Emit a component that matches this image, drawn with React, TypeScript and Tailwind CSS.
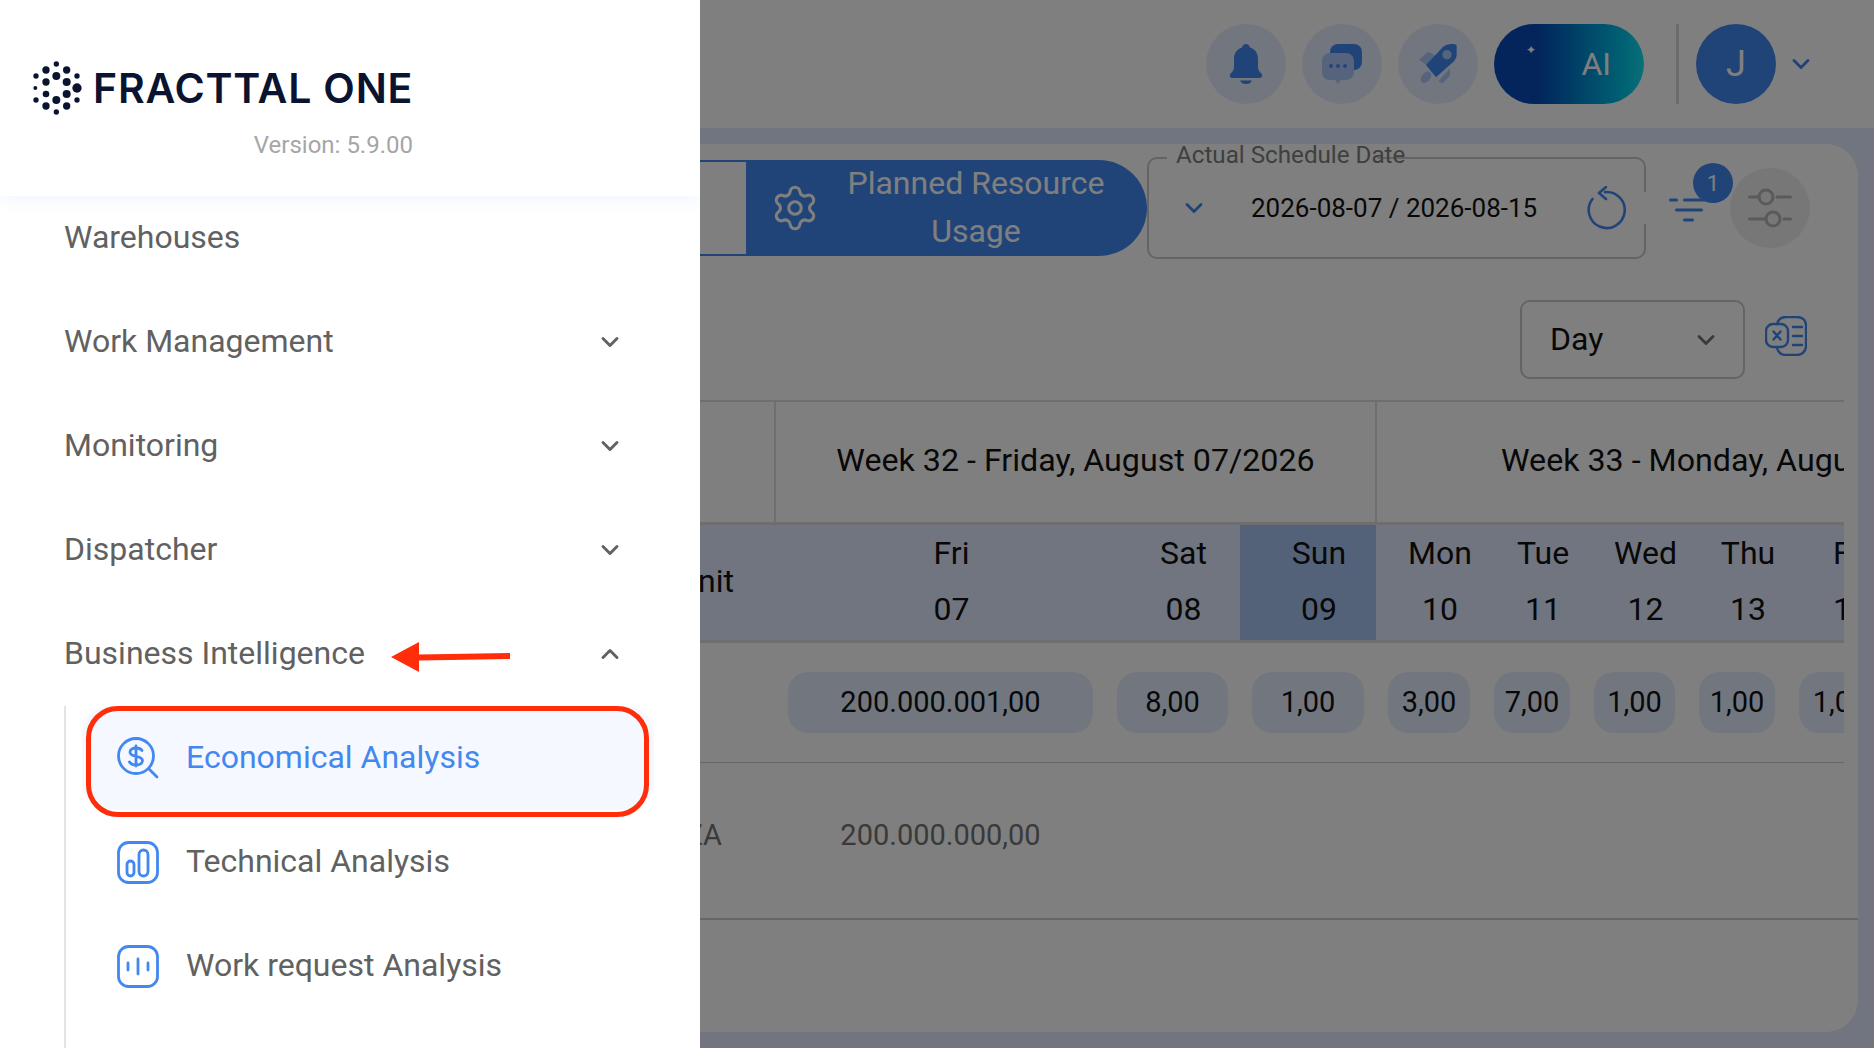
import { ChevronDown, ChevronUp, Settings } from "lucide-react";

const days = [
  { label: "Fri", num: "07", value: "200.000.001,00", width: "w-[329px]", sunday: false },
  { label: "Sat", num: "08", value: "8,00", width: "w-[135px]", sunday: false },
  { label: "Sun", num: "09", value: "1,00", width: "w-[136px]", sunday: true },
  { label: "Mon", num: "10", value: "3,00", width: "w-[106px]", sunday: false },
  { label: "Tue", num: "11", value: "7,00", width: "w-[100px]", sunday: false },
  { label: "Wed", num: "12", value: "1,00", width: "w-[105px]", sunday: false },
  { label: "Thu", num: "13", value: "1,00", width: "w-[100px]", sunday: false },
  { label: "Fri", num: "14", value: "1,00", width: "w-[106px]", sunday: false },
];

const dots = [
  [109, 42, 8], [78, 60, 11], [140, 60, 11], [48, 78, 8], [109, 78, 12], [171, 78, 8],
  [78, 96, 11], [140, 96, 12], [46, 114, 6], [171, 114, 14], [78, 132, 10], [140, 132, 12],
  [48, 150, 8], [109, 150, 12], [171, 150, 8], [78, 168, 11], [140, 168, 11], [109, 186, 8],
];

function Logo() {
  return (
    <svg width="120" height="70" viewBox="0 0 360 210" className="absolute left-[20px] top-[50px]">
      {dots.map(([cx, cy, r], i) => (
        <circle key={i} cx={cx} cy={cy} r={r} fill="#0a1430" />
      ))}
    </svg>
  );
}

function BellIcon() {
  return (
    <svg width="36" height="42" viewBox="0 0 36 42">
      <path d="M18 1c2.2 0 3.6 1.500 3.900 3.400C27.500 6 30 10.500 30 16v8c0 3 1.500 4.800 3.500 6.800 1.500 1.500.6 4.200-1.800 4.200H4.300c-2.400 0-3.300-2.700-1.800-4.200C4.500 28.800 6 27 6 24v-8C6 10.500 8.500 6 14.100 4.400 14.400 2.500 15.800 1 18 1z" fill="#4288f0" />
      <path d="M12 37.500h12c-1 2.500-3 3.500-6 3.500s-5-1-6-3.500z" fill="#4288f0" />
    </svg>
  );
}

function ChatIcon() {
  return (
    <svg width="44" height="44" viewBox="0 0 44 44">
      <rect x="10" y="2" width="32" height="26" rx="8" fill="#4288f0" />
      <path d="M10 11h16c4.500 0 8 3.500 8 8v11c0 4.500-3.500 8-8 8h-5l-3 4-3-4h-5c-4.500 0-8-3.500-8-8V19c0-4.500 3.500-8 8-8z" fill="#aac8f8" />
      <circle cx="11" cy="24" r="1.900" fill="#4288f0" />
      <circle cx="18" cy="24" r="1.900" fill="#4288f0" />
      <circle cx="25" cy="24" r="1.900" fill="#4288f0" />
    </svg>
  );
}

function RocketIcon() {
  return (
    <svg width="42" height="44" viewBox="0 0 42 44">
      <path d="M2.300 17.700L9 11.500c1-1 2-1.800 3.500-1.200L19 14.300 9 23z" fill="#aac8f8" />
      <path d="M21.700 38.700L33 26.300v6c0 1-.3 1.700-1 2.500L26 41c-1 .8-2 .3-2.600-.4z" fill="#aac8f8" />
      <ellipse cx="9" cy="35.300" rx="4.200" ry="6.500" transform="rotate(40 9 35.300)" fill="#aac8f8" />
      <path d="M9 23L25.700 5.300C29 2 35 1.500 38.500 2.500c1 .3 1.200 1 1.200 2V12c0 3-1 5-3 7.500L19 35.300z" fill="#4288f0" />
      <circle cx="30" cy="12.700" r="4.700" fill="#aac8f8" />
    </svg>
  );
}

function ResetIcon() {
  return (
    <svg width="42" height="44" viewBox="0 0 42 44" fill="none" stroke="#4288f0" strokeWidth="2.600" strokeLinecap="round" strokeLinejoin="round">
      <path d="M18 6.100A18 18 0 1 1 5.500 13" />
      <path d="M19 1l-7 6 7 6" />
    </svg>
  );
}

function FilterIcon() {
  return (
    <svg width="40" height="24" viewBox="0 0 40 24" fill="none" stroke="#4288f0" strokeWidth="3" strokeLinecap="round">
      <path d="M1.500 2h6M15.500 2h20M7.500 12h25M15.500 22h8" />
    </svg>
  );
}

function SlidersIcon() {
  return (
    <svg width="44" height="40" viewBox="0 0 44 40" fill="none" stroke="#b4b4b4" strokeWidth="3" strokeLinecap="round">
      <circle cx="18" cy="9" r="7" />
      <circle cx="25" cy="31" r="7" />
      <path d="M1.500 9H11M29 9h13.500M1.500 31H18M36 31h6.500" />
    </svg>
  );
}

function ExcelIcon() {
  return (
    <svg width="42" height="40" viewBox="0 0 42 40" fill="none" stroke="#4288f0" strokeWidth="2.400" strokeLinecap="round">
      <path d="M12 8c1-4 4-7 9-7h11c5 0 9 3 9 8v21c0 5-4 9-9 9H21c-5 0-8-3-9-7" />
      <rect x="1" y="8" width="22" height="23" rx="7" />
      <path d="M8.500 15.500l7 8M15.500 15.500l-7 8M28 11h9M28 20h9M28 29h9" />
    </svg>
  );
}

function DollarSearchIcon() {
  return (
    <svg width="42" height="42" viewBox="0 0 42 42" fill="none" stroke="#4288f0" strokeWidth="2.800" strokeLinecap="round" strokeLinejoin="round">
      <circle cx="19" cy="19" r="17.500" />
      <path d="M32 32l8 8" />
      <path d="M19 9v20M25 13.500c-1-1.500-3-2.500-6-2.500-3.500 0-6 1.700-6 4.200 0 5.600 12.500 2.600 12.500 8.400 0 2.600-2.700 4.400-6.500 4.400-3 0-5.300-1-6.500-3" />
    </svg>
  );
}

function BarsIcon() {
  return (
    <svg width="42" height="43" viewBox="0 0 42 43" fill="none" stroke="#4288f0" strokeWidth="2.800">
      <rect x="1.500" y="1.500" width="39" height="40" rx="10" />
      <rect x="10" y="20" width="7" height="15" rx="3.500" />
      <rect x="22" y="9" width="9" height="26" rx="4.500" />
    </svg>
  );
}

function WaveIcon() {
  return (
    <svg width="42" height="43" viewBox="0 0 42 43" fill="none" stroke="#4288f0" strokeWidth="2.800" strokeLinecap="round">
      <rect x="1.500" y="1.500" width="39" height="40" rx="10" />
      <path d="M11 18v7M21 14v15M31 18v7" />
    </svg>
  );
}

function RoundButton({ children }: { children: React.ReactNode }) {
  return <div className="flex h-20 w-20 items-center justify-center rounded-full bg-[#e4eefe]">{children}</div>;
}

function MenuItem({ label, open }: { label: string; open?: boolean }) {
  return (
    <div className="flex h-[104px] items-center justify-between pl-[64px] pr-[76px] text-[32px] text-[#616161]">
      <span className="pb-[2px]">{label}</span>
      {open ? <ChevronUp size={28} strokeWidth={2.5} /> : <ChevronDown size={28} strokeWidth={2.5} />}
    </div>
  );
}

function SubItem({ label, icon, active }: { label: string; icon: React.ReactNode; active?: boolean }) {
  return (
    <div className={`ml-4 mr-[46px] flex h-[104px] items-center gap-[27px] rounded-[28px] pl-[35px] text-[32px] ${active ? "bg-[#f5f8fe] text-[#4288f0]" : "text-[#616161]"}`}>
      {icon}
      <span className="pb-[2px]">{label}</span>
    </div>
  );
}

export default function App() {
  return (
    <div className="relative h-[1048px] w-[1874px] overflow-hidden font-['Roboto',sans-serif]">
      <main className="flex h-full flex-col bg-[#e0eaff]">
        <header className="flex h-[128px] items-center justify-end bg-white pr-[59px]">
          <div className="flex items-center gap-4">
            <RoundButton><BellIcon /></RoundButton>
            <RoundButton><ChatIcon /></RoundButton>
            <RoundButton><RocketIcon /></RoundButton>
            <div className="relative flex h-20 w-[150px] items-center justify-end rounded-full bg-gradient-to-r from-[#084ab8] from-30% to-[#16e0f0] pr-[33px] text-[32px] text-white">
              <span className="absolute left-[32px] top-[20px] text-[12px] leading-none">✦</span>
              AI
            </div>
          </div>
          <div className="ml-[32px] mr-[17px] h-20 w-[3px] bg-[#d9d9d9]" />
          <div className="flex h-20 w-20 items-center justify-center rounded-full bg-[#4288f0] text-[36px] text-white">J</div>
          <ChevronDown size={28} strokeWidth={2.5} className="ml-[11px] text-[#4288f0]" />
        </header>

        <section className="mb-4 ml-4 mr-4 mt-4 flex min-h-0 flex-1 flex-col overflow-hidden rounded-[32px] bg-white">
          <div className="flex items-start justify-end pr-[48px] pt-[13px]">
            <div className="mt-[3px] h-[96px] w-[300px] border-y-2 border-[#4288f0]" />
            <div className="mt-[3px] flex h-[96px] w-[401px] items-center rounded-r-full bg-[#4288f0] pl-[24px] text-white">
              <Settings size={50} strokeWidth={1.5} />
              <span className="ml-[8px] w-[296px] pb-[2px] text-center text-[32px] leading-[48px]">Planned Resource Usage</span>
            </div>
            <div className="relative flex h-[102px] w-[499px] items-center rounded-[10px] border-2 border-[#c8c8c8]">
              <span className="absolute left-[18px] top-[-2px] h-[2px] w-[210px] bg-white" />
              <span className="absolute right-[-2px] top-[33px] h-[32px] w-[2px] bg-white" />
              <span className="absolute left-[27px] top-[-18px] whitespace-nowrap text-[24.2px] leading-[28px] text-[#7f7f7f]">Actual Schedule Date</span>
              <ChevronDown size={28} strokeWidth={2.5} className="ml-[31px] text-[#4288f0]" />
              <span className="ml-[43px] text-[26px] text-[#111]">2026-08-07 / 2026-08-15</span>
              <span className="ml-auto mr-[15px]"><ResetIcon /></span>
            </div>
            <div className="relative ml-[23px] mt-[41px] h-[24px] w-[61px]">
              <FilterIcon />
              <span className="absolute left-[24px] top-[-35px] flex h-10 w-10 items-center justify-center rounded-full bg-[#4288f0] text-[22px] text-white">1</span>
            </div>
            <div className="mt-[11px] flex h-20 w-20 items-center justify-center rounded-full bg-[#eeeeee]">
              <SlidersIcon />
            </div>
          </div>

          <div className="mt-[41px] flex items-center justify-end gap-5 pr-[50px]">
            <div className="flex h-[79px] w-[225px] items-center justify-between rounded-[10px] border-2 border-[#c8c8c8] pl-7 pr-[23px] text-[32px] text-[#111]">
              <span className="pb-[2px]">Day</span>
              <ChevronDown size={28} strokeWidth={2.5} className="text-[#757575]" />
            </div>
            <span className="mb-[7px] pr-[1px]"><ExcelIcon /></span>
          </div>

          <div className="ml-[14px] mr-[14px] mt-[21px] overflow-hidden border-t-2 border-[#dddddd]">
            <div className="flex h-[120px] items-center whitespace-nowrap text-[32px] text-[#111]">
              <div className="h-full w-[746px] shrink-0 border-r-2 border-[#dddddd]" />
              <div className="flex h-full w-[601px] shrink-0 items-center justify-center border-r-2 border-[#dddddd] pb-[3px] text-[32.2px]">Week 32 - Friday, August 07/2026</div>
              <div className="pb-[3px] pl-[124px] text-[32.2px]">Week 33 - Monday, August 10/2026</div>
            </div>
            <div className="flex h-[121px] border-y-[3px] border-[#dddddd] bg-[#e1ebff] text-[32px] text-[#111]">
              <div className="flex w-[746px] shrink-0 items-center justify-end pb-[3px] pr-[42px]">Unit</div>
              {days.map((day, i) => (
                <div key={i} className={`${day.width} flex shrink-0 flex-col items-center justify-center pb-[3px] pl-[22px] leading-[56px] ${day.sunday ? "bg-[#a8c4f2]" : ""}`}>
                  <span>{day.label}</span>
                  <span>{day.num}</span>
                </div>
              ))}
            </div>
            <div className="flex h-[120px] items-center border-b border-[#cccccc] text-[29px] text-[#111]">
              <div className="w-[746px] shrink-0" />
              {days.map((day, i) => (
                <div key={i} className={`${day.width} shrink-0 px-3`}>
                  <div className="flex h-[61px] items-center justify-center rounded-[20px] bg-[#e4eefe]">{day.value}</div>
                </div>
              ))}
            </div>
            <div className="flex h-[155px] items-center pb-[10px] text-[29px] text-[#757575]">
              <div className="w-[692px] shrink-0 text-right">PIEZA</div>
              <div className="ml-[66px] w-[305px] shrink-0 text-center">200.000.000,00</div>
            </div>
          </div>
          <div className="border-t-2 border-[#cccccc]" />
        </section>
      </main>

      <div className="absolute inset-0 bg-black/50" />

      <aside className="absolute left-0 top-0 flex h-full w-[700px] flex-col overflow-hidden bg-white">
        <div className="relative z-10 h-[196px] shrink-0 bg-white shadow-[0_6px_14px_rgba(66,136,240,0.07)]">
          <Logo />
          <div className="absolute left-[93px] top-[62px] whitespace-nowrap text-[41px] font-semibold leading-[52px] tracking-[0.8px] text-[#0a1430] font-['Inter',sans-serif]">FRACTTAL ONE</div>
          <div className="absolute right-[287px] top-[130px] text-[24px] leading-[30px] text-[#a6a6a6]">Version: 5.9.00</div>
        </div>
        <div className="-mt-[10px] flex-1">
          <div className="flex h-[104px] items-center pb-[2px] pl-[64px] text-[32px] text-[#616161]">Warehouses</div>
          <MenuItem label="Work Management" />
          <MenuItem label="Monitoring" />
          <MenuItem label="Dispatcher" />
          <MenuItem label="Business Intelligence" open />
          <div className="ml-[64px] border-l-2 border-[#e4e4e4] pb-10">
            <SubItem label="Economical Analysis" icon={<DollarSearchIcon />} active />
            <SubItem label="Technical Analysis" icon={<BarsIcon />} />
            <SubItem label="Work request Analysis" icon={<WaveIcon />} />
          </div>
        </div>
      </aside>

      {/* annotations on top of the menu */}
      <div className="absolute left-[86px] top-[706px] h-[111px] w-[563px] rounded-[32px] border-[5px] border-[#ff2d0a]" />
      <svg width="122" height="32" viewBox="0 0 122 32" className="absolute left-[390px] top-[641px]">
        <path d="M1 16L29 1v12.500l91-1.500v6l-91 1.500V31z" fill="#ff2d0a" />
      </svg>
    </div>
  );
}
